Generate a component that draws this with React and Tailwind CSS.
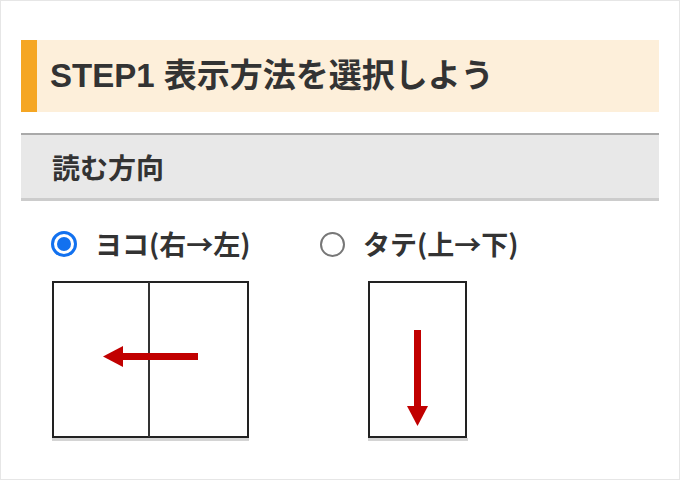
// Reading-direction picker: STEP1 heading, section bar, two radio options with page thumbnails
const jp = 'font-["Liberation_Sans","Noto_Sans_CJK_JP",sans-serif]'

function Radio({ checked }) {
  if (checked) {
    return (
      <span className="flex h-[26px] w-[26px] shrink-0 items-center justify-center rounded-full border-[3px] border-[#1271ef] bg-white">
        <span className="h-[14px] w-[14px] rounded-full bg-[#1271ef]" />
      </span>
    )
  }
  return (
    <span className="h-[25px] w-[25px] shrink-0 rounded-full border-2 border-[#777777] bg-white" />
  )
}

function SpreadThumb() {
  return (
    <svg width="198" height="162" viewBox="0 0 198 162">
      <rect x="1" y="158" width="197" height="3" fill="#d4d4d4" />
      <rect x="2" y="2" width="195" height="155" fill="#fff" stroke="#222" strokeWidth="2" />
      <line x1="98" y1="2" x2="98" y2="157" stroke="#333" strokeWidth="2" />
      <rect x="70" y="73" width="77" height="7" fill="#c10000" />
      <polygon points="52,76.5 72,66 72,87" fill="#c10000" />
    </svg>
  )
}

function PageThumb() {
  return (
    <svg width="102" height="162" viewBox="0 0 102 162">
      <rect x="1" y="158" width="100" height="3" fill="#d4d4d4" />
      <rect x="2" y="2" width="97" height="155" fill="#fff" stroke="#222" strokeWidth="2" />
      <rect x="47" y="50" width="7" height="78" fill="#c10000" />
      <polygon points="40,126 61,126 50.5,146" fill="#c10000" />
    </svg>
  )
}

function Option({ checked, label, className, thumbClass, children }) {
  return (
    <div className={`flex flex-col items-start ${className}`}>
      <label className="flex h-8 items-center gap-[18px]">
        <Radio checked={checked} />
        <span className="font-['Noto_Sans_CJK_JP',sans-serif] text-[27px] font-bold text-[#333]">
          {label}
        </span>
      </label>
      <div className={`mt-[20px] ${thumbClass}`}>{children}</div>
    </div>
  )
}

export default function App() {
  return (
    <div className="h-[480px] w-[680px] overflow-hidden border border-[#e6e6e6] bg-white">
      <div className="px-5 pt-[39px]">
        <h2
          className={`flex h-[72px] items-center border-l-[16px] border-[#f5a623] bg-[#fdefda] pl-[13px] text-[33px] font-bold text-[#333] ${jp}`}
        >
          STEP1 表示方法を選択しよう
        </h2>

        <div className="mt-[21px] flex h-[68px] items-center border-t-2 border-b-[3px] border-t-[#a9a9a9] border-b-[#cccccc] bg-[#e8e8e8] pl-[31px]">
          <h3 className="font-['Noto_Sans_CJK_JP',sans-serif] text-[28px] font-bold text-[#333]">
            読む方向
          </h3>
        </div>

        <div className="mt-[27px] flex pl-[30px]">
          <Option checked label="ヨコ(右→左)" className="w-[269px]" thumbClass="ml-0">
            <SpreadThumb />
          </Option>
          <Option label="タテ(上→下)" thumbClass="ml-[47px]">
            <PageThumb />
          </Option>
        </div>
      </div>
    </div>
  )
}
